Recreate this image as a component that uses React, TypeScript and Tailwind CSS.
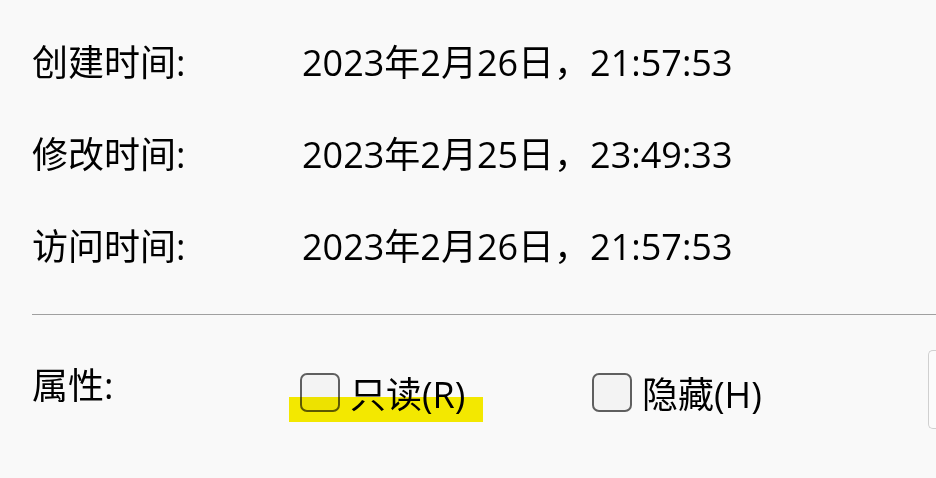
const rows = [
  { label: "创建时间:", value: "2023年2月26日，21:57:53" },
  { label: "修改时间:", value: "2023年2月25日，23:49:33" },
  { label: "访问时间:", value: "2023年2月26日，21:57:53" },
]

function Checkbox({ label, className }: { label: string; className?: string }) {
  return (
    <label className={"flex items-center gap-[10px] " + (className ?? "")}>
      <span className="w-[40px] h-[39px] rounded-[7px] border-2 border-[#5f5f5f] bg-[#f3f3f3] shrink-0" />
      <span className="leading-none mt-[6px]">{label}</span>
    </label>
  )
}

export default function App() {
  return (
    <div
      className="w-[936px] h-[478px] bg-[#f9f9f9] text-black text-[36px] overflow-hidden relative"
      style={{ fontFamily: '"Open Sans", "Noto Sans CJK SC", sans-serif' }}
    >
      <div className="pl-[32px] pt-[17px]">
        {rows.map((row) => (
          <div key={row.label} className="flex items-center h-[92px]">
            <div className="w-[270px] leading-none">{row.label}</div>
            <div className="leading-none">{row.value}</div>
          </div>
        ))}

        <div className="mt-[21px] h-px bg-[#a0a0a0]" />

        <div className="flex items-start pt-[53px]">
          <div className="w-[268px] leading-none">属性:</div>
          <div className="flex items-center mt-[3px]">
            <Checkbox label="只读(R)" className="w-[292px]" />
            <Checkbox label="隐藏(H)" />
          </div>
          <div className="ml-auto -mt-[18px] w-[8px] h-[79px] rounded-l-[5px] border border-r-0 border-[#d0d0d0] bg-[#fbfbfb]" />
        </div>
      </div>

      {/* marker highlight */}
      <div className="absolute left-[289px] top-[397px] w-[194px] h-[25px] bg-[#f9ee00] mix-blend-multiply pointer-events-none" />
    </div>
  )
}
